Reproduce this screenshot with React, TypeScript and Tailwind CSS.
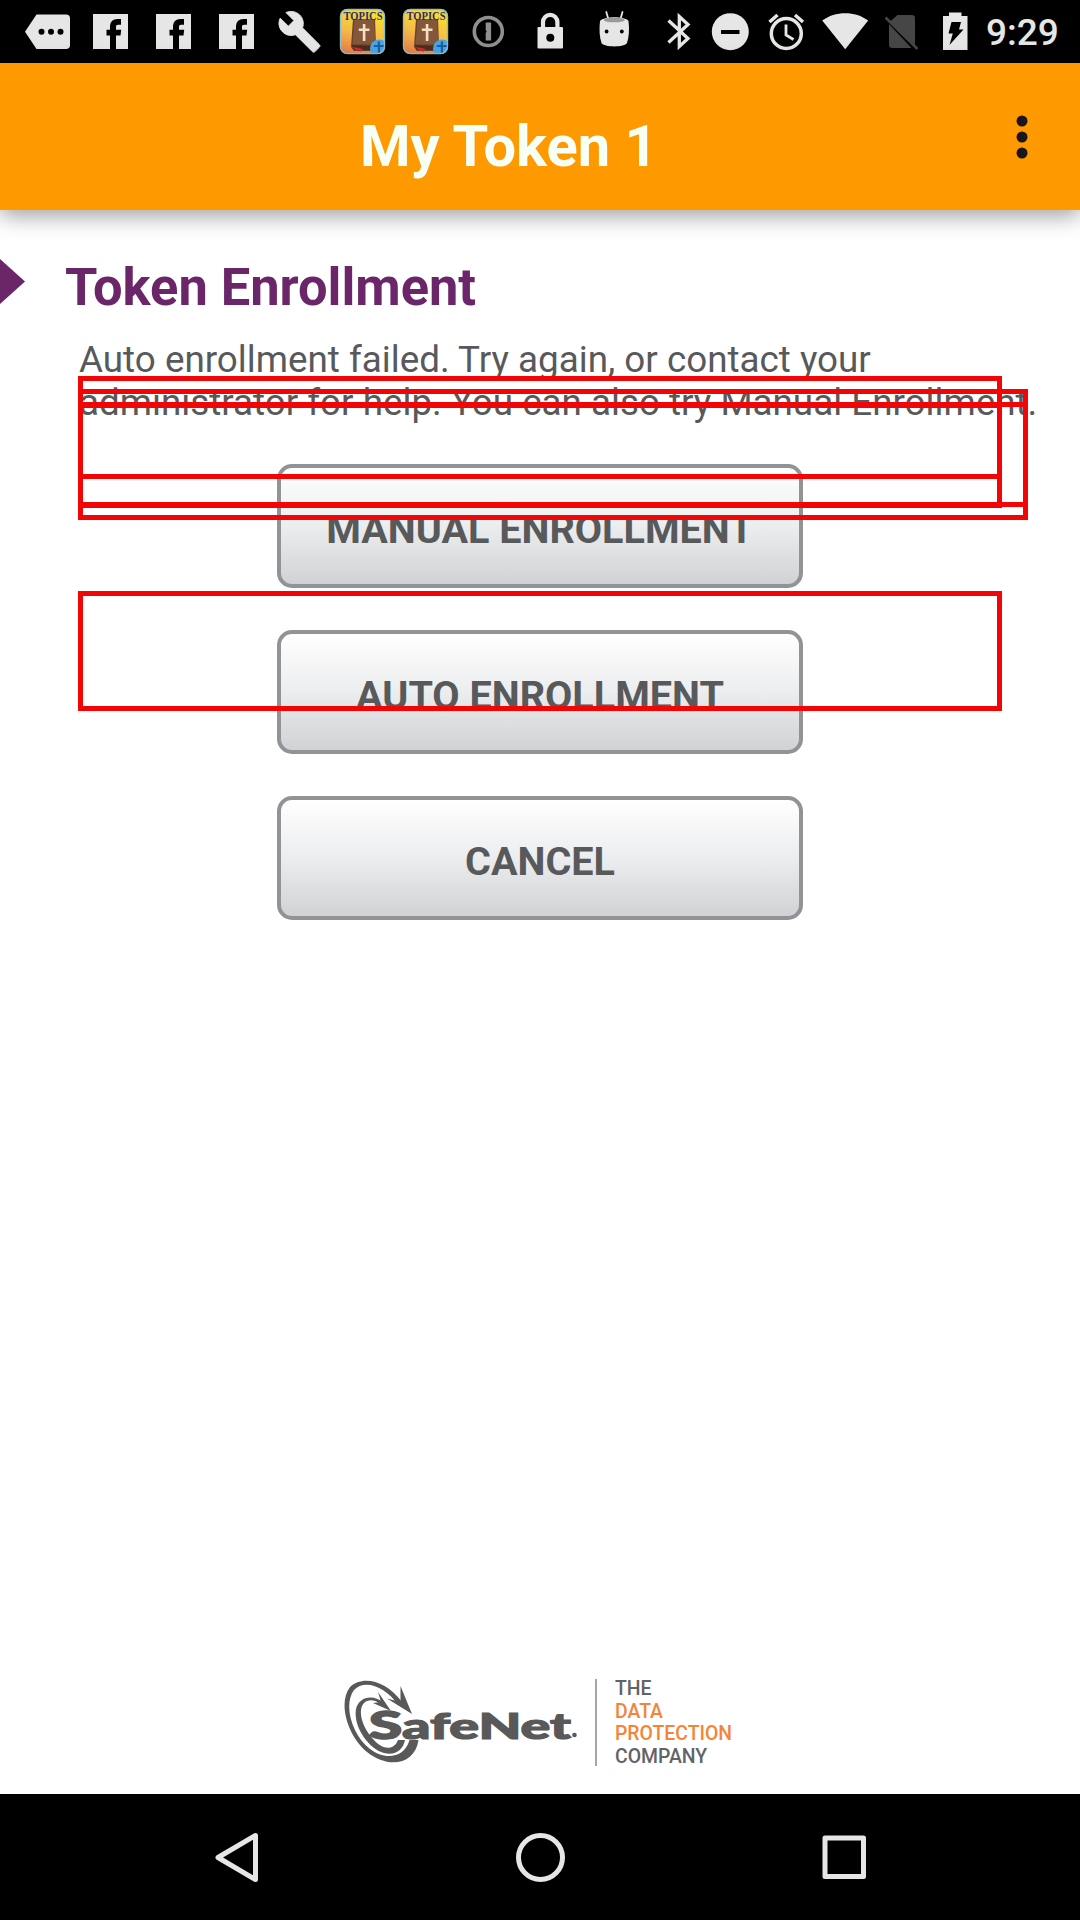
import React from 'react';

const LIGHT = '#e6e6e6';

function StatusIcon({ x, w, children }: { x: number; w: number; children?: React.ReactNode }) {
  return (
    <svg className="block shrink-0" width={w} height={63} viewBox={`${x} 0 ${w} 63`} fill={LIGHT}>
      {children}
    </svg>
  );
}

function FacebookIcon({ x }: { x: number }) {
  return (
    <StatusIcon x={x} w={63}>
      <g transform={`translate(${x} 0)`}>
        <path d="M8 14h35v35H8z" />
        <path d="M25 49V35.500H21.500V29.800H25V27c0-5.200 2.800-8 7.500-8H36v5.800h-2.800c-1.600 0-2.200.8-2.200 2.300v2.700h5.200l-.7 5.700H31V49z" fill="#000" />
      </g>
    </StatusIcon>
  );
}

function TopicsIcon({ x, id }: { x: number; id: string }) {
  return (
    <StatusIcon x={x} w={63}>
      <defs>
        <linearGradient id={id} x1="0.3" y1="0" x2="0" y2="1">
          <stop offset="0" stopColor="#f8dc2c" />
          <stop offset="0.45" stopColor="#f4bd48" />
          <stop offset="1" stopColor="#e8754a" />
        </linearGradient>
        <clipPath id={`${id}-clip`}>
          <rect x="6" y="9" width="45" height="45" rx="7" />
        </clipPath>
      </defs>
      <g transform={`translate(${x} 0)`}>
        <g clipPath={`url(#${id}-clip)`}>
          <rect x="6" y="9" width="45" height="45" fill={`url(#${id})`} />
          <path d="M19 19h22l1 27-4 5H20l-3-4z" fill="#6a4129" />
          <path d="M20.500 19H40l1.500 25.500H18.500z" fill="#85573a" />
          <path d="M18 45l2 5h21v-4z" fill="#4e2d1d" />
          <path d="M19 47l3 4 3-1 1 2 3-3z" fill="#d32735" />
          <path d="M28.800 24h2.600v4.500H35.500v2.400h-4.100V41h-2.600V30.900H24.800v-2.400h4z" fill="#f4dfc3" />
          <circle cx="45" cy="48.500" r="9" fill="#4aa5e6" />
          <path d="M43.800 41.500h2.200v3.500h4v2h-4v6h-2.200v-6h-4v-2h4z" fill="#1c5f9f" />
        </g>
        <rect x="6.500" y="9.500" width="44" height="44" rx="7" fill="none" stroke="#8ebfc6" strokeWidth="1.400" />
        <text x="9.500" y="19.500" textLength="39" lengthAdjust="spacingAndGlyphs" fontFamily="Liberation Serif, serif" fontWeight="700" fontSize="12" fill="#2c2c72">
          TOPICS
        </text>
      </g>
    </StatusIcon>
  );
}

function StatusBar() {
  return (
    <div className="flex h-[63px] items-start bg-black">
      <StatusIcon x={0} w={85}>
        <path d="M36.500 14.500H66a4 4 0 0 1 4 4V45a4 4 0 0 1-4 4H36.500L25 31.700z" />
        <g fill="#000">
          <circle cx="41.500" cy="31.700" r="3" />
          <circle cx="51" cy="31.700" r="3" />
          <circle cx="60.500" cy="31.700" r="3" />
        </g>
      </StatusIcon>
      <FacebookIcon x={85} />
      <FacebookIcon x={148} />
      <FacebookIcon x={211} />
      <StatusIcon x={274} w={60}>
        <g transform="translate(277.200 9.400) scale(1.860)">
          <path d="M22.700 19l-9.100-9.100c.9-2.300.4-5-1.500-6.900-2-2-5-2.400-7.400-1.300L9 6 6 9 1.600 4.700C.4 7.100.9 10.100 2.900 12.100c1.900 1.900 4.600 2.400 6.900 1.500l9.100 9.100c.4.400 1 .4 1.400 0l2.300-2.300c.5-.4.5-1.100.1-1.400z" stroke={LIGHT} strokeWidth="0.500" />
        </g>
      </StatusIcon>
      <TopicsIcon x={334} id="topics-a" />
      <TopicsIcon x={397} id="topics-b" />
      <StatusIcon x={460} w={60}>
        <circle cx="488.300" cy="31.500" r="14" fill="none" stroke="#8f8f8f" strokeWidth="3.600" />
        <path d="M485.700 22.500h5.400v18h-5.400v-7.500l1-1.500-1-1.500z" fill="#8f8f8f" />
      </StatusIcon>
      <StatusIcon x={520} w={60}>
        <path d="M543 29v-7a7.200 7.200 0 0 1 14.400 0v7" fill="none" stroke={LIGHT} strokeWidth="4.200" />
        <rect x="537.500" y="27" width="25.500" height="21.500" rx="1" />
        <circle cx="550.300" cy="37.700" r="4" fill="#000" />
      </StatusIcon>
      <StatusIcon x={580} w={70}>
        <path d="M606.300 12l2 7M622.500 12l-2 7" stroke={LIGHT} strokeWidth="1.800" strokeLinecap="round" />
        <path d="M600 21c4-5 25-5 28.500 0 1 8 .5 16-1.500 22-2 4.500-23.500 4.500-25.500 0-2-6-2.500-14-1.500-22z" />
        <ellipse cx="614.300" cy="20" rx="10.500" ry="2.300" fill="#999" />
        <circle cx="606.600" cy="31.500" r="1.900" fill="#000" />
        <circle cx="621.800" cy="31.500" r="1.900" fill="#000" />
      </StatusIcon>
      <StatusIcon x={650} w={55}>
        <path d="M668.500 20.500L688 38.500 679.300 46.500V16.500L688 24.500 668.500 42.500" fill="none" stroke={LIGHT} strokeWidth="3.300" />
      </StatusIcon>
      <StatusIcon x={705} w={53}>
        <circle cx="730.300" cy="31.700" r="18.500" />
        <path d="M721 30h18.500v4H721z" fill="#000" />
      </StatusIcon>
      <StatusIcon x={758} w={58}>
        <circle cx="786.300" cy="33.500" r="15" fill="none" stroke={LIGHT} strokeWidth="3.500" />
        <path d="M786 24.500V35l7.500 4.500" fill="none" stroke={LIGHT} strokeWidth="2.800" />
        <path d="M769.500 22l8-7M803 22l-8-7" stroke={LIGHT} strokeWidth="3.500" />
      </StatusIcon>
      <StatusIcon x={816} w={60}>
        <path d="M845.200 49.200L822.200 20.500c13-9.800 33-9.800 46 0z" />
      </StatusIcon>
      <StatusIcon x={876} w={52}>
        <path d="M897.500 15H912a3 3 0 0 1 3 3v27L890 21.500zM889 24l22.500 24H892a3 3 0 0 1-3-3z" fill="#464646" />
        <path d="M885.500 17.500l32 31.500" stroke="#464646" strokeWidth="2.600" />
      </StatusIcon>
      <StatusIcon x={928} w={58}>
        <path d="M949 12.500h12.500V16H967.500v34H943V16h6z" />
        <path d="M951.500 22h9.500l-2 7.500h4.500L949.500 45l3.300-11.500H948.500z" fill="#000" />
      </StatusIcon>
      <span className="font-['Roboto'] text-[37px] leading-[66px] font-medium text-[#e6e6e6]">9:29</span>
    </div>
  );
}

function EnrollButton({ children }: { children: React.ReactNode }) {
  return (
    <button className="flex h-[124px] w-[526px] items-center justify-center rounded-[15px] border-[4px] border-[#929396] bg-linear-to-b from-white via-[#ecedee] to-[#d0d2d4] pt-[7px] text-[39.600px] leading-[46px] font-bold text-[#58595b]">
      {children}
    </button>
  );
}

function Outline({ className }: { className: string }) {
  return <div className={`pointer-events-none absolute left-[78px] border-[5px] border-[#f20505] ${className}`} />;
}

function SafeNetLogo() {
  return (
    <svg className="block" width="240" height="90" viewBox="340 1676 240 90" fill="#595959">
      <path d="M402 1702C386 1680 362 1675 350 1687C337 1704 349 1738 367 1752C388 1769 415 1765 418.500 1740H409.500C404 1759 384 1760 370 1749C352 1735 343 1705 354 1690C365 1678.500 386 1687 398 1705z" />
      <path d="M400.500 1686L412 1714 387 1698.500 400.500 1702z" />
      <path d="M384 1703C374 1694 359 1696 356 1709C353 1727 369 1749 384 1753C395 1756 403 1750 405 1740H398C394 1751 382 1750 373 1739C361 1726 356 1706 367 1701C373 1698.500 379 1702 382 1706z" />
      <path d="M378 1692L391 1711 373 1703 381 1702z" />
      <text x="369" y="1738.500" fontFamily="Lato, sans-serif" fontWeight="900" fontSize="37" stroke="#595959" strokeWidth="1.600" textLength="33" lengthAdjust="spacingAndGlyphs">S</text>
      <text x="402" y="1738.500" fontFamily="Lato, sans-serif" fontWeight="900" fontSize="35.500" stroke="#595959" strokeWidth="1.200" textLength="169" lengthAdjust="spacingAndGlyphs">afeNet</text>
      <circle cx="574.500" cy="1735" r="2.300" />
    </svg>
  );
}

export default function App() {
  return (
    <div className="relative flex h-[1920px] w-[1080px] flex-col overflow-hidden bg-white font-['Roboto',sans-serif]">
      <StatusBar />
      <header className="flex h-[147px] items-center bg-[#ff9900] pr-[51px] pl-[360px] shadow-[0_5px_22px_rgba(0,0,0,0.4)]">
        <h1 className="grow pt-[18px] text-[57.800px] leading-[68px] font-bold whitespace-nowrap text-[#f8fff4]">My Token 1</h1>
        <svg className="block" width="14" height="44" viewBox="0 0 14 44" fill="#1c141c">
          <circle cx="7" cy="6" r="5.500" />
          <circle cx="7" cy="22" r="5.500" />
          <circle cx="7" cy="38" r="5.500" />
        </svg>
      </header>

      <main className="flex grow flex-col">
        <div className="mt-[46px] flex h-[62px] items-center">
          <svg className="mb-[13px] block" width="65" height="46" viewBox="0 0 65 46">
            <path d="M0 1L25 23.500 0 46z" fill="#6b2569" />
          </svg>
          <h2 className="text-[52.400px] leading-[62px] font-bold text-[#6b2569]">Token Enrollment</h2>
        </div>
        <p className="mt-[20px] ml-[79px] text-[36.800px] leading-[43px] whitespace-nowrap text-[#58595b]">
          Auto enrollment failed. Try again, or contact your
          <br />
          administrator for help. You can also try Manual Enrollment.
        </p>
        <div className="mt-[40px] flex flex-col items-center gap-[42px]">
          <EnrollButton>MANUAL ENROLLMENT</EnrollButton>
          <EnrollButton>AUTO ENROLLMENT</EnrollButton>
          <EnrollButton>CANCEL</EnrollButton>
        </div>
      </main>

      <footer className="flex h-[118px] items-start pl-[340px]">
        <SafeNetLogo />
        <div className="mt-[3px] ml-[15px] h-[87px] w-[2px] bg-[#a5a5a5]" />
        <div className="mt-[2px] ml-[18px] text-[19.400px] leading-[22.700px] font-medium text-[#626366]">
          <div>THE</div>
          <div className="text-[#f58439]">DATA</div>
          <div className="text-[#f58439]">PROTECTION</div>
          <div>COMPANY</div>
        </div>
      </footer>

      <nav className="flex h-[126px] items-center justify-between bg-black pr-[210px] pl-[211px]">
        <svg width="50" height="60" viewBox="0 0 50 60" fill="none" stroke={LIGHT} strokeWidth="5" strokeLinejoin="round">
          <path d="M44.500 8.500v44L7 30.500z" />
        </svg>
        <svg width="60" height="60" viewBox="0 0 60 60" fill="none" stroke={LIGHT} strokeWidth="5">
          <circle cx="29.500" cy="30.500" r="22" />
        </svg>
        <svg width="50" height="60" viewBox="0 0 50 60" fill="none" stroke={LIGHT} strokeWidth="5" strokeLinejoin="round">
          <rect x="5" y="11" width="38.500" height="38.500" />
        </svg>
      </nav>

      <Outline className="top-[376px] h-[103px] w-[924px]" />
      <Outline className="top-[389px] h-[118px] w-[950px]" />
      <Outline className="top-[402px] h-[118px] w-[950px]" />
      <Outline className="top-[403px] h-[105px] w-[924px]" />
      <Outline className="top-[591px] h-[120px] w-[924px]" />
    </div>
  );
}
